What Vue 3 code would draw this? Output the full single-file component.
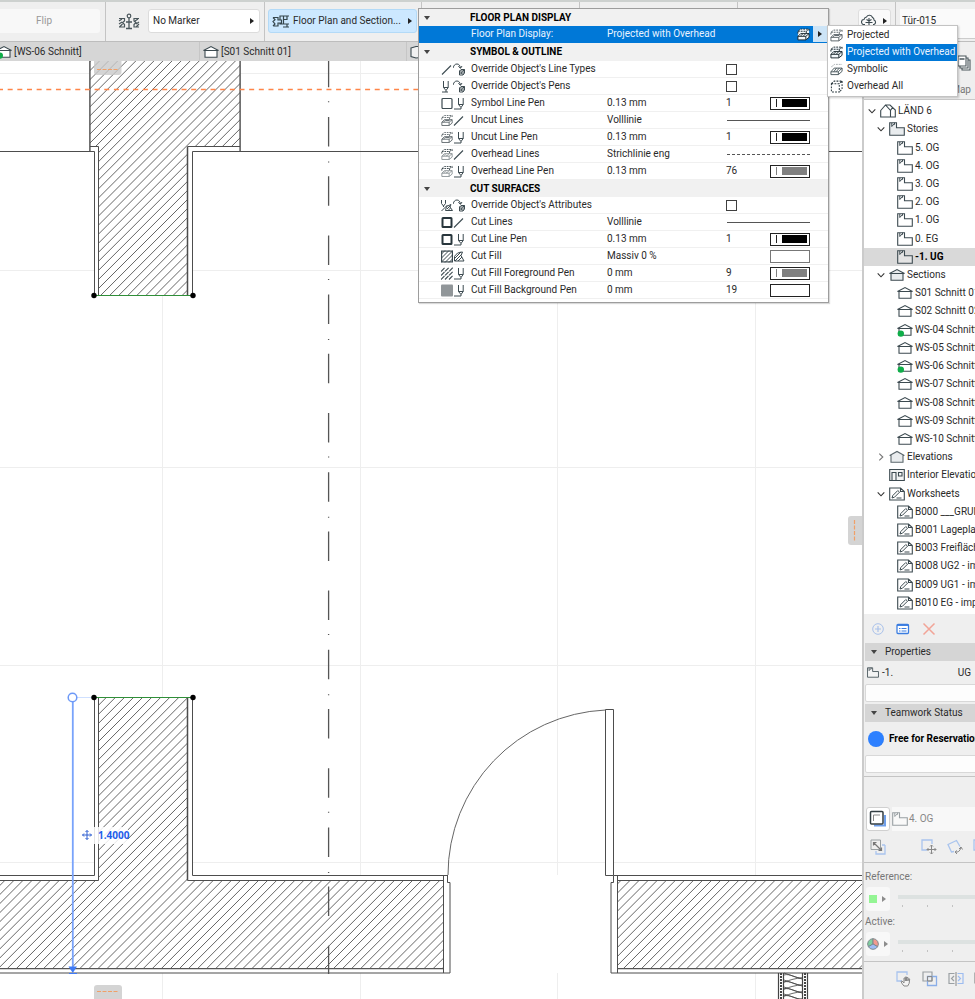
<script setup>
import { ref } from 'vue'

const flip = ref('Flip')
const elementName = ref('Tür-015')

const groups = [
  {
    title: 'FLOOR PLAN DISPLAY',
    rows: [{ label: 'Floor Plan Display:', value: 'Projected with Overhead', kind: 'menu', active: true }],
  },
  {
    title: 'SYMBOL & OUTLINE',
    rows: [
      { icons: ['line', 'override'], label: "Override Object's Line Types", kind: 'check' },
      { icons: ['pen-s', 'override'], label: "Override Object's Pens", kind: 'check' },
      { icons: ['square', 'pen'], label: 'Symbol Line Pen', value: '0.13 mm', num: '1', kind: 'pen', pen: 'black' },
      { icons: ['cube', 'line'], label: 'Uncut Lines', value: 'Volllinie', kind: 'line' },
      { icons: ['cube', 'pen'], label: 'Uncut Line Pen', value: '0.13 mm', num: '1', kind: 'pen', pen: 'black' },
      { icons: ['cube-over', 'line'], label: 'Overhead Lines', value: 'Strichlinie eng', kind: 'line', dashed: true },
      { icons: ['cube-over', 'pen'], label: 'Overhead Line Pen', value: '0.13 mm', num: '76', kind: 'pen', pen: 'gray' },
    ],
  },
  {
    title: 'CUT SURFACES',
    rows: [
      { icons: ['attrs', 'override'], label: "Override Object's Attributes", kind: 'check' },
      { icons: ['square-bold', 'line'], label: 'Cut Lines', value: 'Volllinie', kind: 'line' },
      { icons: ['square-bold', 'pen'], label: 'Cut Line Pen', value: '0.13 mm', num: '1', kind: 'pen', pen: 'black' },
      { icons: ['hatch-box', 'fill'], label: 'Cut Fill', value: 'Massiv 0 %', num: '', kind: 'pen', pen: 'blank' },
      { icons: ['hatch', 'pen'], label: 'Cut Fill Foreground Pen', value: '0 mm', num: '9', kind: 'pen', pen: 'gray' },
      { icons: ['solid', 'pen'], label: 'Cut Fill Background Pen', value: '0 mm', num: '19', kind: 'pen', pen: 'empty' },
    ],
  },
]

const options = [
  { label: 'Projected', icon: 'cube' },
  { label: 'Projected with Overhead', icon: 'cube-full', active: true },
  { label: 'Symbolic', icon: 'cube-sym' },
  { label: 'Overhead All', icon: 'cube-dash' },
]

const tree = [
  { level: 0, icon: 'project', label: 'LÄND 6', open: true },
  { level: 1, icon: 'story-fill', label: 'Stories', open: true },
  { level: 2, icon: 'story', label: '5. OG' },
  { level: 2, icon: 'story', label: '4. OG' },
  { level: 2, icon: 'story', label: '3. OG' },
  { level: 2, icon: 'story', label: '2. OG' },
  { level: 2, icon: 'story', label: '1. OG' },
  { level: 2, icon: 'story', label: '0. EG' },
  { level: 2, icon: 'story', label: '-1. UG', current: true },
  { level: 1, icon: 'section-fill', label: 'Sections', open: true },
  { level: 2, icon: 'section', label: 'S01 Schnitt 01' },
  { level: 2, icon: 'section', label: 'S02 Schnitt 02' },
  { level: 2, icon: 'section-dot', label: 'WS-04 Schnitt' },
  { level: 2, icon: 'section', label: 'WS-05 Schnitt' },
  { level: 2, icon: 'section-dot', label: 'WS-06 Schnitt' },
  { level: 2, icon: 'section', label: 'WS-07 Schnitt' },
  { level: 2, icon: 'section', label: 'WS-08 Schnitt' },
  { level: 2, icon: 'section', label: 'WS-09 Schnitt' },
  { level: 2, icon: 'section', label: 'WS-10 Schnitt' },
  { level: 1, icon: 'elevation', label: 'Elevations', closed: true },
  { level: 1, icon: 'interior', label: 'Interior Elevations' },
  { level: 1, icon: 'sheet', label: 'Worksheets', open: true },
  { level: 2, icon: 'sheet', label: 'B000 ___GRUNDLAGEN' },
  { level: 2, icon: 'sheet', label: 'B001 Lageplan' },
  { level: 2, icon: 'sheet', label: 'B003 Freiflächen' },
  { level: 2, icon: 'sheet', label: 'B008 UG2 - import' },
  { level: 2, icon: 'sheet', label: 'B009 UG1 - import' },
  { level: 2, icon: 'sheet', label: 'B010 EG - import' },
]

// 45 degree wall hatch: every line satisfies x + y = c
const hatchStep = 9.06
const hatchPath = Array.from({ length: 200 }, (_, i) => 115.2 + i * hatchStep)
  .map((c) => `M${(c - 1000).toFixed(2)} 1000L${(c - 50).toFixed(2)} 50`)
  .join('')

const gridX = [162, 360, 557, 755]
const gridY = [73, 270, 467, 665, 862]
const zigzag = Array.from({ length: 5 }, (_, i) => 975 + i * 7)
</script>

<template>
  <div class="app">
    <svg class="sprite" aria-hidden="true">
      <symbol id="tri-right" viewBox="0 0 6 8"><path d="M1 1l4 3-4 3z" fill="#222" /></symbol>
      <symbol id="tri-down" viewBox="0 0 8 6"><path d="M1 1h6L4 5z" fill="#444" /></symbol>
      <symbol id="chev-down" viewBox="0 0 8 8"><path d="M.7 2.3L4 5.8l3.3-3.5" fill="none" stroke="#333" stroke-width="1.1" /></symbol>
      <symbol id="chev-right" viewBox="0 0 8 8"><path d="M2.3.7L5.8 4 2.3 7.3" fill="none" stroke="#777" stroke-width="1.1" /></symbol>
      <symbol id="line" viewBox="0 0 12 13"><path d="M1 11.5L10 2.500" stroke="#3c4a50" stroke-width="1.1" /></symbol>
      <symbol id="pen" viewBox="0 0 12 13">
        <path d="M1 12h7M5.500 1v6.500L8 10.500l2.200-3V1M8 10.500V12M5.500 7.500h4.700" fill="none" stroke="#3c4a50" />
      </symbol>
      <symbol id="pen-s" viewBox="0 0 12 13">
        <path d="M1 12h6M2.500 1v6.500L5 10.500l2.200-3V1M5 10.500V12M2.500 7.500h4.700" fill="none" stroke="#3c4a50" />
      </symbol>
      <symbol id="override" viewBox="1 0 12 13">
        <path d="M1 5C2 2 3 1 5 1s3 1.500 3.500 4M6.300 3.300l2.200 2L10 3" fill="none" stroke="#3c4a50" />
        <path d="M7.500 8L9 6.500h3.500V10L11 12H7.500zM7.500 8H11v4M11 8l1.500-1.500" fill="none" stroke="#3c4a50" />
        <circle cx="9.200" cy="10" r="1" fill="#3c4a50" />
      </symbol>
      <symbol id="square" viewBox="0 0 12 12"><rect x="1" y="1" width="10" height="10" rx="1" fill="none" stroke="#3c4a50" stroke-width="1.2" /></symbol>
      <symbol id="square-bold" viewBox="0 0 12 12"><rect x="1.500" y="1.500" width="9" height="9" rx=".5" fill="none" stroke="#28363c" stroke-width="2" /></symbol>
      <symbol id="solid" viewBox="0 0 12 12"><rect width="12" height="12" rx="1" fill="#919699" /></symbol>
      <symbol id="hatch" viewBox="0 0 12 12">
        <path d="M0 4l4-4M0 8l8-8M0 12L12 0M4 12l8-8M8 12l4-4" fill="none" stroke="#3c4a50" stroke-width="1.1" stroke-dasharray="5 .8" />
      </symbol>
      <symbol id="hatch-box" viewBox="0 0 12 12">
        <rect x=".6" y=".6" width="10.800" height="10.800" fill="none" stroke="#3c4a50" stroke-width="1.2" />
        <path d="M0 4l4-4M0 8l8-8M0 12L12 0M4 12l8-8M8 12l4-4" fill="none" stroke="#3c4a50" />
      </symbol>
      <symbol id="fill" viewBox="0 0 12 12">
        <path d="M1.500 10.500V6Q4 1.500 9.500 1.500L8 5l3 5.500z" fill="none" stroke="#3c4a50" />
        <path d="M1.500 8L8 1.500M2 10.500L8.500 4M5 10.500l4-4" stroke="#3c4a50" />
      </symbol>
      <symbol id="attrs" viewBox="0 0 12 13">
        <path d="M.5 1v3.500l2 2.500 2-2.500V1M2.500 7v1M.5 12l6-6" fill="none" stroke="#3c4a50" />
        <path d="M4.500 11.500l1-4 4.500-2-1 2.500 2.500 3.500zM6 10l3-3M7.500 11l2-2" fill="none" stroke="#3c4a50" />
      </symbol>
      <symbol id="cube" viewBox="0 0 14 13">
        <path d="M1 5.500V3l3-2.300h9V3M1 3h9l3-2.300M10 3v2" fill="none" stroke="#555f64" stroke-dasharray="2 1" />
        <path d="M1 8.500h8.500v3.800H1zM1 8.500L4 5.500h9L9.500 8.500M13 5.500v4l-3.500 2.800M3 8l2-1.500h5" fill="none" stroke="#555f64" />
      </symbol>
      <symbol id="cube-over" viewBox="0 0 14 13">
        <path d="M1 5.500V3l3-2.300h9V3M1 3h9l3-2.300M10 3v2" fill="none" stroke="#28363c" stroke-dasharray="2 1" />
        <path d="M1 8.500h8.500v3.800H1zM1 8.500L4 5.500h9L9.500 8.500M13 5.500v4l-3.500 2.800M3 8l2-1.500 1.500 1.500L9 6.500" fill="none" stroke="#848c90" />
      </symbol>
      <symbol id="cube-full" viewBox="0 0 14 13">
        <path d="M1 3L4 .7h9v8.800l-3.500 2.800H1z" fill="#f3f8fc" />
        <path d="M1 5.500V3l3-2.300h9V3M1 3h9l3-2.300M10 3v2" fill="none" stroke="#17252b" stroke-dasharray="2 1" />
        <path d="M1 8.500h8.500v3.800H1zM1 8.500L4 5.500h9L9.500 8.500M13 5.500v4l-3.500 2.800M4 8l2-2M7 8l2-2" fill="none" stroke="#17252b" />
      </symbol>
      <symbol id="cube-sym" viewBox="0 0 14 13">
        <path d="M2 4V3l3-2h8" fill="none" stroke="#a5abae" stroke-dasharray="2 1" />
        <path d="M1 9h8v3H1zM1 9l3.500-4h8.500L9 9M13 5v3.500L9 12M4 9l3-4M6.500 9l3.500-4" fill="none" stroke="#46545a" />
      </symbol>
      <symbol id="cube-dash" viewBox="0 0 14 13">
        <path d="M1.500 3.500h8.500v8.800H1.500zM1.500 3.500l3-2.800H13l-3 2.800M13 .7v8.800l-3 2.800" fill="none" stroke="#28363c" stroke-width="1.1" stroke-dasharray="2 1.3" />
      </symbol>
      <symbol id="story" viewBox="0 0 16 14">
        <path d="M.7.7h6.800v5h7.800v7.600H.7z" fill="#fff" fill-opacity=".3" stroke="#3c4a50" stroke-width="1.1" />
        <path d="M2.800 1v3.500L5.500 1.500M5.500.7v2" fill="none" stroke="#3c4a50" />
      </symbol>
      <symbol id="story-fill" viewBox="0 0 16 14">
        <path d="M.7.7h6.800v5h7.800v7.600H.7z" fill="#e9ecee" stroke="#3c4a50" stroke-width="1.1" />
        <path d="M2.800 1v3.500L5.500 1.500M5.500.7v2" fill="none" stroke="#3c4a50" />
      </symbol>
      <symbol id="section" viewBox="0 0 16 14">
        <path d="M.5 5.500L8 1.500l7.500 4zM2 5.500v6.800h12V5.500" fill="#fff" stroke="#3c4a50" stroke-width="1.1" />
      </symbol>
      <symbol id="section-dot" viewBox="0 0 16 14">
        <path d="M.5 5.500L8 1.500l7.500 4zM2 5.500v6.800h12V5.500" fill="#fff" stroke="#3c4a50" stroke-width="1.1" />
        <circle cx="3.800" cy="10.600" r="3.200" fill="#0fae49" />
      </symbol>
      <symbol id="section-fill" viewBox="0 0 16 14">
        <path d="M.5 5.500L8 1.500l7.500 4zM2 5.500v6.800h12V5.500" fill="#e9ecee" stroke="#3c4a50" stroke-width="1.1" />
      </symbol>
      <symbol id="elevation" viewBox="0 0 16 14">
        <path d="M.7 5.500L8 1.500l7.300 4H14v6.800H2V5.500z" fill="#e9ecee" stroke="#5b676c" stroke-width="1.1" />
      </symbol>
      <symbol id="view3d" viewBox="0 0 16 14">
        <path d="M1 3l5-1.500h9V12l-9 1-5-1.500z" fill="#f1f1f1" stroke="#3c4a50" stroke-width="1.1" />
      </symbol>
      <symbol id="interior" viewBox="0 0 16 14">
        <path d="M.7 1.500h14.600v11H.7zM3 12.500v-8h4v8M9.500 4.500h3.500v3.500H9.500z" fill="#f4f5f5" stroke="#3c4a50" stroke-width="1.1" />
      </symbol>
      <symbol id="sheet" viewBox="0 0 16 14">
        <path d="M.7 1h10.800l3.800 3.500v8.500H.7zM11.500 1v3.500h3.800" fill="#fff" stroke="#3c4a50" stroke-width="1.1" />
        <path d="M3 11l.8-2.500 5-5 1.700 1.700-5 5zM7.500 11h5" fill="none" stroke="#3c4a50" />
      </symbol>
      <symbol id="project" viewBox="0 0 16 14">
        <path d="M.7 6.500L5.500 1l5 5.500V13H.7zM5.500 1H10l5.300 5V13h-4.800M10.500 6.500l2-3" fill="#fff" stroke="#3c4a50" stroke-width="1.1" />
      </symbol>
    </svg>

    <header class="toolbar">
      <div class="cell c1"><button class="flat flip" disabled>{{ flip }}</button></div>
      <div class="cell c2">
        <svg class="anchor" width="22" height="18" viewBox="0 0 22 18" fill="none" stroke="#4a565b">
          <path d="M11 5v11M8 9h6M8 15.500h6" stroke-width="1.3" /><circle cx="11" cy="3" r="1.800" stroke-width="1.2" />
          <path d="M1 5.500h5.500V8l-2 1.500 2 2V14H1M1 8l3-2M1 11l3-2M1.500 14l3-3" stroke-width="1.2" />
          <path d="M21 5.500h-5V8l2 1.500-2 2V14h5M17 8l3-2M18 11l3-2M18 14l3-3" stroke-width="1.2" />
        </svg>
        <label class="dropdown">
          <select aria-label="Marker"><option>No Marker</option></select>
          <svg class="tri"><use href="#tri-right" /></svg>
        </label>
      </div>
      <div class="cell c3">
        <button class="popup-btn">
          <svg width="17" height="13" viewBox="0 0 17 13" fill="none" stroke="#34454c" stroke-width="1.2">
            <path d="M1 2.500h5v2.500h3.500v3H6V11H1M1 2.500l2 2.200L1 6.500 3 9l-2 2M8 5V1h9M8 8v1h9M11.500 1v8M15 1v3.500h-3.500M15 9v3M11 12h6" />
          </svg>
          <span>Floor Plan and Section...</span>
          <svg class="tri"><use href="#tri-right" /></svg>
        </button>
      </div>
      <div class="cell c4"></div>
      <div class="cell c4"></div>
      <div class="cell c4 end">
        <button class="cloud" aria-label="Classification">
          <svg width="16" height="14" viewBox="0 0 16 14" fill="none" stroke="#3c4a50" stroke-width="1.1">
            <path d="M4 10.500H3A2.500 2.500 0 0 1 3 5.500 3 3 0 0 1 5.500 3 3.300 3.300 0 0 1 11.500 3.500 2.500 2.500 0 0 1 13 6a2.400 2.400 0 0 1 0 4.500h-1M8 4v8M8 7L5.500 5.500M8 7l2.500-1.500M4.500 8.500h7M5.500 12h5" />
          </svg>
          <svg class="tri"><use href="#tri-right" /></svg>
        </button>
      </div>
      <div class="cell last"><input v-model="elementName" class="name" aria-label="Element ID" /></div>
    </header>

    <div class="body">
      <main class="work">
        <nav class="tabs">
          <a href="#" class="tab first"><svg class="ic"><use href="#section-dot" /></svg>[WS-06 Schnitt]</a>
          <a href="#" class="tab second"><svg class="ic"><use href="#section" /></svg>[S01 Schnitt 01]</a>
          <a href="#" class="tab rest" aria-label="Next tab"><svg class="ic"><use href="#view3d" /></svg></a>
        </nav>
        <div class="plan">
          <svg class="drawing" fill="none">
            <defs>
              <clipPath id="walls">
                <path d="M90 61H240V146.500H187.500V295.500H98.500V146.500H90z" />
                <path d="M98.500 697.500H187.500V880.500H443.500V968.500H-5V880.500H98.500z" />
                <path d="M617.500 880.500H1600V968.500H617.500z" />
              </clipPath>
            </defs>
            <g transform="translate(0 -61)">
              <g stroke="#eeeeee">
                <path v-for="x in gridX" :key="'x' + x" :d="`M${x}.5 61V1400`" />
                <path v-for="y in gridY" :key="'y' + y" :d="`M0 ${y}.5H1600`" />
              </g>
              <path d="M90 61H240V151H193V295H94V151H90zM94 697H193V875H448V973H0V875H94zM448 875H613V973H448zM613 875H1600V973H613z" fill="#fff" />
              <path :d="hatchPath" clip-path="url(#walls)" stroke="#3f3f3f" stroke-width=".8" />
              <g stroke="#4d4d4d">
                <path d="M89.900 61V151.500M240.100 61V151.500" stroke-width="1.4" />
                <path d="M90 146.500H98.500V295M240 146.500H187.500M0 151.500H94.500V295M1600 151.500H192.500V295" />
                <path d="M187.500 146.500V295M187.500 697V880.500" stroke-width="1.5" />
                <path d="M0 875.500H94.500V697M0 880.500H98.500V697M448 875.500H192.500V697M187.500 880.500H443.500" />
                <path d="M0 968.700H443.500" stroke="#555" stroke-width="1.3" />
                <path d="M0 973H450" stroke-width="1.2" />
                <path d="M443.500 875V973M447.500 875.500V882.500H450V973" />
                <path d="M1600 875.500H613.500V882.500H611V973H1600M1600 880.500H617.500M617.500 875V973" />
                <path d="M617.500 968.700H1600" stroke="#555" stroke-width="1.3" />
                <path d="M605.500 709.500H613.500V875.500H605.500z" fill="#fff" />
                <path d="M605.500 710A165 165 0 0 0 448 875" stroke="#666" />
              </g>
              <path d="M94 295.500H193M94 697.500H193" stroke="#2f8f38" stroke-width="1.2" />
              <path d="M328.600 -60.600V974" stroke="#555" stroke-width="1.3" stroke-dasharray="29.5 15 1 13.7 29.5 29.7 29.5 14 1 14.7" />
              <path d="M-2 89.500H862" stroke="#ff8548" stroke-width="1.4" stroke-dasharray="5 4.66" />
              <g stroke="#444" stroke-width=".8">
                <path d="M778.500 973V1003M783.500 973V1003M802.500 973V1003M807.500 973V1003" stroke-width="1.2" />
                <path d="M781 973V1003M805 973V1003" stroke-dasharray="2 1" stroke-width="2" />
                <path v-for="y in zigzag" :key="y" :d="`M784 ${y}C790 ${y - 2} 796 ${y + 4} 802 ${y + 3}C796 ${y + 3} 790 ${y + 5} 784 ${y + 7}M784 ${y - 2}L802 ${y + 4}`" />
              </g>
              <path d="M77 697.500H94" stroke="#cfe0ff" />
              <path d="M72.800 702V970" stroke="#79a3fb" stroke-width="1.8" />
              <circle cx="72.500" cy="697.500" r="4.300" fill="#fff" stroke="#6d99f7" stroke-width="1.5" />
              <path d="M68.500 966.500h8.500l-4.200 6.500z" fill="#3f7af5" /><path d="M69 973.500H77" stroke="#3f7af5" />
              <g fill="#000">
                <circle cx="94" cy="295.500" r="2.700" /><circle cx="193" cy="295.500" r="2.700" />
                <circle cx="94" cy="697.500" r="2.700" /><circle cx="193" cy="697.500" r="2.700" />
              </g>
              <path d="M81 827H128V844H81z" fill="#fff" fill-opacity=".85" />
              <path d="M87 830.500V839.500M82.500 835H91.500M85.500 832L87 830.500 88.500 832M85.500 838L87 839.500 88.500 838M84 833.500L82.500 835 84 836.500M90 833.500L91.500 835 90 836.500" stroke="#2e5fd0" />
              <text x="98" y="838.500" class="dim">1.4000</text>
              <g fill="#c9c9c9" fill-opacity=".8">
                <path d="M94 61H121.500V72Q121.500 75 118.500 75H97Q94 75 94 72z" />
                <path d="M94 999V988Q94 985 97 985H119Q122 985 122 988V999z" />
                <path d="M862 516H851Q848 516 848 519V542Q848 545 851 545H862z" />
              </g>
              <path d="M97 69.500H118M97 991.500H119M854.500 520V541" stroke="#f0a068" stroke-width="1.2" stroke-dasharray="4 1.5" />
            </g>
          </svg>
        </div>
      </main>

      <aside class="side">
        <div class="side-head">
          <svg width="14" height="16" viewBox="0 0 14 16" fill="#fff" stroke="#4a565b" stroke-width="1.1">
            <path d="M5 5h8v10H5z" /><path d="M3 3h8v10H3z" /><path d="M1 1h8v10H1z" /><path d="M2.500 4h5" stroke-width="1.5" />
          </svg>
          <span>Project Map</span>
        </div>
        <ul class="tree">
          <li v-for="(n, i) in tree" :key="i" :class="['node', 'l' + n.level, { current: n.current }]">
            <svg v-if="n.level < 2" class="chev">
              <use v-if="n.open" href="#chev-down" /><use v-else-if="n.closed" href="#chev-right" />
            </svg>
            <svg class="ic"><use :href="'#' + n.icon" /></svg>
            <span>{{ n.label }}</span>
          </li>
        </ul>
        <div class="tools">
          <button aria-label="New"><svg width="12" height="12" viewBox="0 0 12 12" fill="none" stroke="#a9c1ea"><circle cx="6" cy="6" r="5.300" /><path d="M6 3v6M3 6h6" stroke-width="1.2" /></svg></button>
          <button aria-label="Settings"><svg width="14" height="12" viewBox="0 0 14 12" fill="none" stroke="#3b7de0"><rect x="1" y="1.500" width="11.500" height="9" rx="1" stroke-width="1.3" fill="#fff" /><path d="M1 2.200h11.500" stroke-width="1.5" /><path d="M3 5.500h1.500M5.500 5.500h5M3 8h1.500M5.500 8h5" /></svg></button>
          <button aria-label="Delete"><svg width="14" height="14" viewBox="0 0 14 14" fill="none" stroke="#f2a497" stroke-width="1.5"><path d="M1.500 1.500l11 11M12.500 1.500l-11 11" /></svg></button>
        </div>
        <section class="props">
          <h2><svg class="trid"><use href="#tri-down" /></svg>Properties</h2>
          <div class="prop-row"><svg width="12" height="11"><use href="#story" /></svg><span>-1.</span><span class="ug">UG</span></div>
          <input aria-label="Story settings" />
        </section>
        <section class="props team">
          <h2><svg class="trid"><use href="#tri-down" /></svg>Teamwork Status</h2>
          <div class="free"><i class="ball"></i><strong>Free for Reservation</strong></div>
          <input aria-label="Teamwork owner" />
        </section>
        <section class="trace">
          <div class="trace-top">
            <button class="trace-btn" aria-label="Trace">
              <svg width="18" height="18" viewBox="0 0 18 18" fill="none">
                <path d="M5 15.500h11V5" stroke="#6f9fea" stroke-width="2" />
                <rect x="1.500" y="1.500" width="12.500" height="12.500" rx="1" fill="#fff" stroke="#333e43" stroke-width="1.5" />
                <path d="M4.500 11V5H11" stroke="#888" />
              </svg>
            </button>
            <div class="trace-name"><svg class="ic"><use href="#story" /></svg>4. OG</div>
          </div>
          <div class="trace-icons">
            <svg class="swap" width="16" height="16" viewBox="0 0 16 16" fill="none" stroke="#9aa0a3"><path d="M15 6h-3M15 6v9H6v-3" stroke="#a9c4ee" stroke-width="1.3" /><path d="M1 1h9.500v9.500H1z" /><path d="M3.500 6.500v-3h3M3.500 3.500l8 8M11.500 8.500v3h-3" stroke="#777" stroke-width="1.2" /></svg>
            <svg width="16" height="16" viewBox="0 0 16 16" fill="none" stroke="#a9c4ee"><path d="M6 11H1V1h10v4" stroke-width="1.3" /><path d="M10.500 6v9M6 10.500h9M9 7.500L10.500 6 12 7.500M9 13.500l1.500 1.500 1.500-1.500M7.500 9L6 10.500 7.500 12M13.500 9l1.500 1.500-1.500 1.500" stroke="#888" /></svg>
            <svg width="16" height="16" viewBox="0 0 16 16" fill="none" stroke="#a9c4ee"><path d="M7 12.500L4.500 13 1 5.500l8.500-4 3.500 6" stroke-width="1.3" /><path d="M8 13q4.500 1 6-4.500M12 10l2-2 1.500 2.500M10 11.500L8 13l2 2" stroke="#888" /></svg>
            <svg width="16" height="16" viewBox="0 0 16 16" fill="none" stroke="#a9c4ee"><path d="M1 1h10v10H1z" stroke-width="1.3" /></svg>
          </div>
        </section>
        <section class="levels">
          <label for="reference">Reference:</label>
          <div class="level">
            <button aria-label="Reference colour"><i class="green"></i><svg class="tri dim-tri"><use href="#tri-right" /></svg></button>
            <div class="slide"><input id="reference" type="range" disabled /><div class="ticks"><i></i><i></i><i></i></div></div>
          </div>
          <label for="active">Active:</label>
          <div class="level">
            <button aria-label="Active colour">
              <svg width="12" height="12" viewBox="0 0 12 12" stroke="#7f8a8e"><path d="M6 6V.7A5.300 5.300 0 0 0 1.400 8.700z" fill="#7fd0a0" /><path d="M6 6V.7A5.300 5.300 0 0 1 10.600 8.700z" fill="#f29a8e" /><path d="M6 6l4.600 2.700A5.300 5.300 0 0 1 1.400 8.700z" fill="#9dbcf5" /></svg>
              <svg class="tri dim-tri"><use href="#tri-right" /></svg>
            </button>
            <div class="slide"><input id="active" type="range" disabled /><div class="ticks"><i></i><i></i><i></i></div></div>
          </div>
        </section>
        <footer class="bottom">
          <svg width="16" height="16" viewBox="0 0 16 16" fill="none" stroke="#a9c4ee"><path d="M6 10H1V1h10v3" stroke-width="1.3" /><path d="M8 15q-2-2-3-4.500l1-.5 2 2V7h1.300v3V6h1.300v4V6.500h1.300V10l.8-2.500 1 .5q0 5-2 7z" fill="#f4f4f4" stroke="#888" /></svg>
          <svg width="16" height="16" viewBox="0 0 16 16" fill="none" stroke="#9aa0a3"><path d="M1 1h9v9H1z" stroke-width="1.2" /><path d="M5.500 5.500h9v9h-9z" stroke="#8aaee8" stroke-width="1.3" /><path d="M5.500 5.500H10V10H5.500z" stroke="#888" /></svg>
          <svg width="16" height="16" viewBox="0 0 16 16" fill="none" stroke="#9aa0a3"><path d="M6.500 2.500H1v10h5.500M6 5L3.500 7.500 6 10" stroke-width="1.2" /><path d="M9.500 2.500H15v10H9.500M10 5l2.500 2.500L10 10" stroke="#9dbcf0" stroke-width="1.2" /><path d="M8 1v14" stroke="#888" /></svg>
          <svg width="16" height="16" viewBox="0 0 16 16" fill="none" stroke="#888"><path d="M1 2h10v10H1z" stroke-width="1.2" /></svg>
        </footer>
      </aside>
    </div>

    <div class="panel" role="dialog" aria-label="Floor Plan and Section">
      <section v-for="g in groups" :key="g.title">
        <h3><svg class="trid"><use href="#tri-down" /></svg><span>{{ g.title }}</span></h3>
        <div v-for="r in g.rows" :key="r.label" :class="['row', { active: r.active }]">
          <span class="pair"><svg v-for="ic in r.icons" :key="ic" class="pic"><use :href="'#' + ic" /></svg></span>
          <label v-if="r.kind === 'check'" class="check-label">
            <span>{{ r.label }}</span><input type="checkbox" />
          </label>
          <template v-else>
            <span>{{ r.label }}</span>
            <span>{{ r.value }}</span>
            <span v-if="r.kind === 'line'" :class="['rule', { dashed: r.dashed }]"></span>
            <template v-else-if="r.kind === 'pen'">
              <span>{{ r.num }}</span>
              <span :class="['swatch', r.pen]"><b></b><i></i></span>
            </template>
            <span v-else class="menu-end">
              <svg class="pic"><use href="#cube-full" /></svg>
              <button aria-label="Choose floor plan display"><svg class="tri"><use href="#tri-right" /></svg></button>
            </span>
          </template>
        </div>
      </section>
    </div>

    <div class="submenu" role="menu">
      <button v-for="o in options" :key="o.label" role="menuitem" :class="{ on: o.active }">
        <span class="mi"><svg class="pic"><use :href="'#' + o.icon" /></svg></span><span class="ml">{{ o.label }}</span>
      </button>
    </div>
  </div>
</template>

<style>
body { margin: 0; background: #efefef; }
</style>

<style scoped>
* { box-sizing: border-box; }
.app {
  position: relative;
  display: flex;
  flex-direction: column;
  min-height: 100vh;
  overflow: hidden;
  font: 10px/16px Roboto, "Open Sans", sans-serif;
  color: #2a2a2a;
  white-space: nowrap;
}
.sprite { display: none; }
button, input, select { font: inherit; color: inherit; margin: 0; padding: 0; border: 0; background: none; }
svg { flex: none; }
.ic { width: 16px; height: 14px; }
.pic { width: 13px; height: 13px; }
.tri { width: 6px; height: 8px; }
.trid { width: 8px; height: 6px; }
.chev { width: 8px; height: 8px; margin-right: 4px; }

.toolbar { display: flex; height: 42px; background: #efefef; border-top: 2px solid #cdd1cf; border-bottom: 1px solid #bdbdbd; }
.cell { display: flex; align-items: flex-start; padding: 7px 4px 0; border-right: 1px solid #c4c4c4; flex: none; }
.c1 { width: 106px; padding-left: 0; }
.c2 { width: 159px; padding-left: 12px; gap: 8px; }
.c3 { width: 157px; padding-left: 3px; }
.c4 { width: 158px; }
.end { justify-content: flex-end; }
.last { flex: 1; border: 0; padding-right: 0; min-width: 0; }
.flip { width: 100px; height: 24px; background: #f8f8f8; border-radius: 0 3px 3px 0; color: #999; padding-right: 12px; }
.anchor { margin-top: 4px; }
.dropdown { display: flex; align-items: center; flex: 1; height: 24px; padding: 0 4px; background: #fff; border: 1px solid #dcdcdc; border-radius: 3px; }
.dropdown select { flex: 1; appearance: none; outline: 0; }
.popup-btn { display: flex; align-items: center; gap: 4px; width: 150px; height: 24px; padding: 0 3px; background: #cce8ff; border: 1px solid #b3daf7; border-radius: 3px; }
.popup-btn span { flex: 1; text-align: left; }
.cloud { display: flex; align-items: center; justify-content: space-between; width: 33px; height: 24px; padding: 0 2px; background: #fafafa; border: 1px solid #dedede; border-radius: 3px; }
.name { width: 100%; height: 30px; padding: 0 2px 6px; background: #fafafa; border-bottom: 1px solid #ccc; }

.body { display: flex; flex: 1; }
.work { display: flex; flex-direction: column; flex: 1; min-width: 0; }
.tabs { display: flex; height: 19px; background: #d6d6d6; overflow: hidden; }
.tab { display: flex; align-items: center; gap: 2px; color: inherit; text-decoration: none; border-right: 1px solid #c6c6c6; flex: none; }
.first { width: 204px; margin-left: -4px; }
.second { width: 207px; padding-left: 3px; }
.rest { flex: 1; padding-left: 3px; border: 0; }
.plan { position: relative; flex: 1; background: #fff; overflow: hidden; }
.drawing { position: absolute; inset: 0; width: 100%; height: 100%; }
.dim { font: bold 10px "Open Sans", sans-serif; fill: #1f5eea; }

.side { display: flex; flex-direction: column; flex: none; width: 113px; background: #efefef; border-left: 2px solid #cbcbcb; overflow: hidden; }
.side-head { display: flex; flex-direction: column; align-items: flex-end; height: 58px; padding: 13px 4px 0 0; gap: 11px; border-bottom: 1px solid #c9c9c9; color: #777; flex: none; }
.tree { display: grid; grid-auto-rows: 1fr; flex: 1; margin: 0; padding: 2px 0; list-style: none; background: #fff; }
.node { display: flex; align-items: center; min-height: 0; }
.node .ic { margin-right: 2px; }
.l0 { padding-left: 4px; }
.l1 { padding-left: 13px; }
.l2 { padding-left: 33px; }
.current { background: #d9d9d9; font-weight: bold; color: #000; }
.tools { display: flex; align-items: center; gap: 12px; height: 29px; padding-left: 8px; }
.tools button { display: flex; }
.props { display: flex; flex-direction: column; padding-left: 1px; margin-bottom: 2px; }
.props h2 { display: flex; align-items: center; gap: 7px; height: 18px; margin: 0; padding-left: 5px; background: #d5d5d5; font-size: 10px; font-weight: normal; }
.prop-row { display: flex; align-items: center; gap: 3px; height: 23px; padding: 0 4px 0 2px; }
.ug { margin-left: auto; }
.props input { height: 18px; width: 120px; background: #fdfdfd; border: 1px solid #d8d8d8; border-radius: 2px; }
.free { display: flex; align-items: center; gap: 5px; height: 33px; padding-left: 3px; color: #000; }
.ball { flex: none; width: 16px; height: 16px; border-radius: 50%; background: radial-gradient(circle at 40% 40%, #2d80ff 65%, #1b62d4); }
.team { margin-bottom: 3px; }
.trace { border-top: 1px solid #c4c4c4; padding-top: 30px; }
.trace-top { display: flex; gap: 2px; padding-left: 1px; }
.trace-btn { display: flex; align-items: center; justify-content: center; width: 24px; height: 24px; margin-left: 1px; background: #fff; border: 1px solid #d0d0d0; border-radius: 3px; }
.trace-name { display: flex; align-items: center; flex: 1; gap: 1px; background: #f8f8f8; color: #888; }
.trace-name .ic { opacity: .5; }
.trace-icons { display: flex; align-items: center; gap: 10px; height: 31px; padding-left: 6px; }
.swap { margin-right: 25px; }
.levels { border-top: 1px solid #c4c4c4; border-bottom: 1px solid #c4c4c4; padding: 4px 0; color: #777; }
.levels label { display: block; height: 20px; line-height: 20px; padding-left: 1px; }
.level { display: flex; gap: 8px; height: 24px; margin-bottom: 1px; }
.level button { display: flex; align-items: center; gap: 4px; justify-content: center; width: 24px; height: 24px; margin-left: 2px; background: #f8f8f8; border-radius: 3px; flex: none; }
.green { width: 8px; height: 8px; background: #94f594; }
.dim-tri { opacity: .5; }
.slide { flex: 1; padding-top: 8px; }
.slide input { display: block; appearance: none; width: 120px; height: 4px; background: #dde2e1; }
.slide input::-webkit-slider-thumb { appearance: none; width: 0; height: 0; }
.ticks { display: flex; gap: 24px; padding: 6px 0 0 4px; }
.ticks i { width: 1px; height: 2px; background: #c2c2c2; }
.bottom { display: flex; align-items: center; gap: 10px; height: 37px; padding: 0 0 3px 32px; }

.panel { position: absolute; left: 418px; top: 8px; width: 411px; padding-bottom: 3px; background: #fff; border: 1px solid #9d9d9d; box-shadow: 1px 1px 1px rgba(0, 0, 0, .15); }
.panel h3 { display: flex; align-items: center; height: 17px; margin: 0; padding-left: 4px; background: #f1f1f1; font-size: 10px; font-weight: bold; color: #000; }
.panel section:nth-child(2) h3 { height: 18px; }
.panel h3 .trid { margin-right: 39px; }
.row { display: grid; grid-template-columns: 30px 136px 119px 44px 40px; align-items: center; height: 17px; padding-left: 22px; border-bottom: 1px solid #f0f0f0; line-height: 16px; }
.row.active { background: #0078d7; color: #e8f3ff; border-color: #0078d7; }
.pair { display: flex; align-items: center; }
.pair .pic { width: 12px; }
.check-label { grid-column: 2 / 6; display: grid; grid-template-columns: 255px 11px; align-items: center; }
.check-label input { appearance: none; width: 11px; height: 11px; border: 1px solid #3f3f3f; background: #fff; }
.rule { grid-column: 4 / 6; border-top: 1px solid #555; margin-left: 1px; }
.rule.dashed { border-top-style: dashed; }
.swatch { display: flex; align-items: center; height: 13px; border: 1px solid #222; background: #fff; padding: 0 2px 0 5px; gap: 5px; }
.swatch b { width: 1px; height: 8px; background: #222; }
.swatch i { flex: 1; height: 8px; background: #000; }
.gray b, .gray i { background: #808080; }
.blank b, .blank i, .empty b, .empty i { visibility: hidden; }
.blank { border-color: #777; }
.menu-end { grid-column: 4 / 6; display: flex; align-items: center; gap: 3px; width: 101px; justify-content: flex-end; }
.menu-end button { display: flex; align-items: center; justify-content: center; width: 14px; height: 16px; background: #cce4f7; }

.submenu { position: absolute; left: 827px; top: 25px; width: 131px; padding: 1px 0; background: #fff; border: 1px solid #c3c3c3; box-shadow: 1px 1px 2px rgba(0, 0, 0, .2); }
.submenu button { display: flex; align-items: center; width: 100%; height: 17px; padding-left: 2px; }
.mi { display: flex; align-items: center; width: 16px; height: 17px; }
.ml { flex: 1; height: 17px; padding-left: 1px; text-align: left; }
.on .ml { background: #0078d7; color: #e8f3ff; }
</style>
